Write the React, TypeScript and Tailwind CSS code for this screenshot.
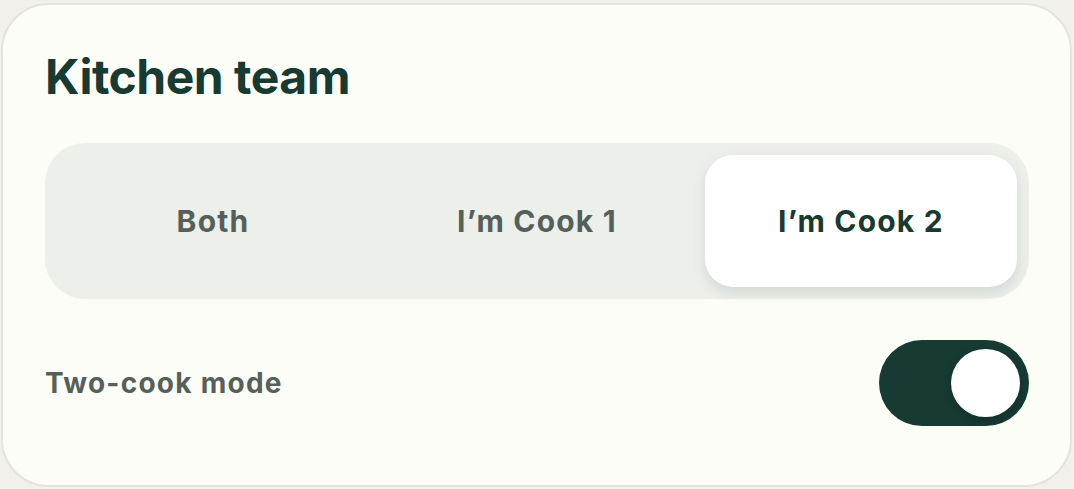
import React, { useState } from 'react';

const tabs = ['Both', 'I’m Cook 1', 'I’m Cook 2'];

export default function App() {
    const [active, setActive] = useState(2);
    const [twoCook, setTwoCook] = useState(true);

    return (
        <div className="w-[1074px] h-[489px] bg-[#f1f0eb] pt-[3px] pl-[1px]" style={{ fontFamily: 'Inter, "Noto Sans", sans-serif' }}>
            <div className="w-[1071px] h-[484px] rounded-[48px] border-2 border-[#e4e3dd] bg-[#fdfdf8] pl-[42px] pr-[41px] pt-[44px]">
                <h1 className="text-[48px] leading-[56px] font-bold text-[#173a32] tracking-[-0.01em]">Kitchen team</h1>

                <div className="mt-[38px] grid grid-cols-3 gap-[12px] p-[12px] rounded-[40px] bg-[#edefeb] h-[156px]">
                    {tabs.map((tab, i) => (
                        <button
                            key={tab}
                            onClick={() => setActive(i)}
                            className={
                                i === active
                                    ? 'rounded-[28px] bg-white text-[#173a32] text-[30px] font-bold tracking-[0.04em] shadow-[0_6px_14px_rgba(23,58,50,0.12)]'
                                    : 'rounded-[28px] text-[#56605b] text-[30px] font-bold tracking-[0.04em]'
                            }
                        >
                            {tab}
                        </button>
                    ))}
                </div>

                <div className="mt-[41px] flex items-center justify-between">
                    <span className="text-[28px] font-bold text-[#56605b] tracking-[0.045em]">Two-cook mode</span>
                    <button
                        onClick={() => setTwoCook(!twoCook)}
                        className={
                            twoCook
                                ? 'w-[150px] h-[86px] rounded-full bg-[#173a33] p-[9px] flex justify-end'
                                : 'w-[150px] h-[86px] rounded-full bg-[#cfd3ce] p-[9px] flex justify-start'
                        }
                    >
                        <span className="block w-[69px] h-[68px] rounded-full bg-white shadow-[0_3px_8px_rgba(0,0,0,0.18)]" />
                    </button>
                </div>
            </div>
        </div>
    );
}
